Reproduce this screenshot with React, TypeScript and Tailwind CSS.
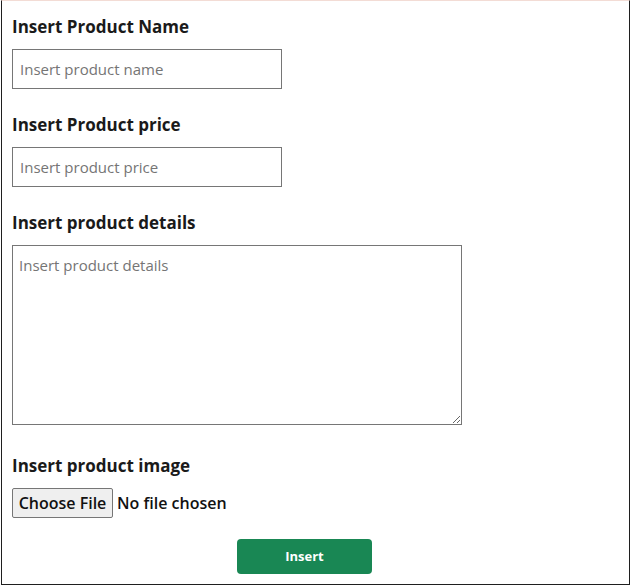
export default function App() {
  const labelCls = "block text-[17px] font-bold leading-[24px] text-[#1a1a1a]";
  const inputCls =
    "block w-[270px] h-[40px] mt-[10px] px-[7px] border border-[#767676] text-[15px] text-[#212529] placeholder-[#757575] outline-none";

  return (
    <div
      className="ml-px w-[629px] h-[585px] border border-[#1f1f1f] border-t-[#f3dcd5] pt-[14px] pl-[10px]"
      style={{ fontFamily: '"Open Sans", "Noto Sans", sans-serif' }}
    >
      <form className="flex flex-col" onSubmit={(e) => e.preventDefault()}>
        <label htmlFor="name" className={labelCls}>
          Insert Product Name
        </label>
        <input id="name" type="text" placeholder="Insert product name" className={inputCls} />

        <label htmlFor="price" className={`${labelCls} mt-[24px]`}>
          Insert Product price
        </label>
        <input id="price" type="text" placeholder="Insert product price" className={inputCls} />

        <label htmlFor="details" className={`${labelCls} mt-[24px]`}>
          Insert product details
        </label>
        <textarea
          id="details"
          placeholder="Insert product details"
          className="block w-[450px] h-[180px] mt-[10px] px-[6px] py-[7px] border border-[#767676] text-[15px] leading-[24px] text-[#212529] placeholder-[#757575] outline-none resize"
        />

        <span className={`${labelCls} mt-[29px]`}>Insert product image</span>
        <label className="flex items-center mt-[10px] h-[30px] cursor-pointer">
          <input type="file" className="hidden" />
          <span className="flex items-center justify-center w-[101px] h-[30px] bg-[#efefef] border border-[#767676] rounded-[2px] text-[16px] font-semibold text-[#111]">
            Choose File
          </span>
          <span className="ml-[4px] text-[16px] font-semibold text-[#111]">
            No file chosen
          </span>
        </label>

        <div className="mt-[21px] pl-[225px]">
          <button
            type="submit"
            className="w-[135px] h-[35px] rounded-[4px] bg-[#198754] text-white text-[13px] font-bold"
          >
            Insert
          </button>
        </div>
      </form>
    </div>
  );
}
